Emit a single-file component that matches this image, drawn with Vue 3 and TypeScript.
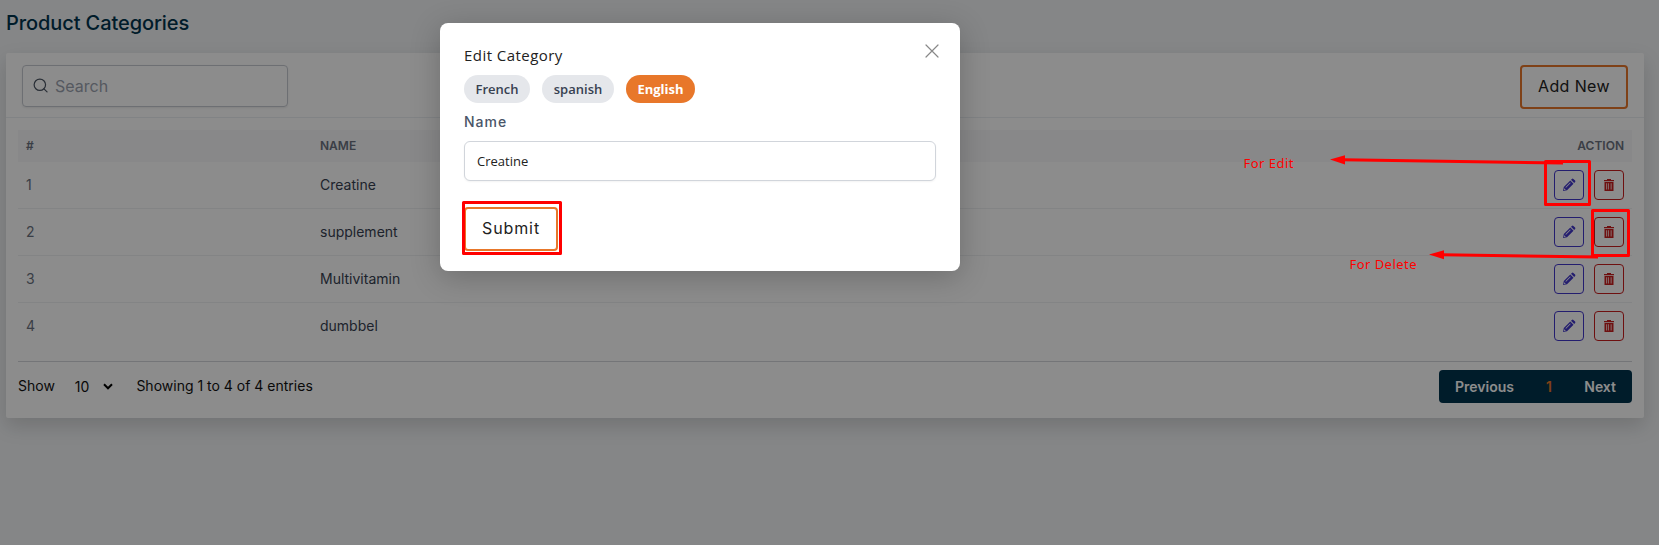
<script setup lang="ts">
import { ref } from 'vue'

interface Category { id: number; name: string }

const categories: Category[] = [
  { id: 1, name: 'Creatine' },
  { id: 2, name: 'supplement' },
  { id: 3, name: 'Multivitamin' },
  { id: 4, name: 'dumbbel' },
]
const languages = ['French', 'spanish', 'English']
const active = ref('English')
const name = ref('Creatine')
const search = ref('')
</script>

<template>
  <div class="screen">
    <main class="page">
      <h1 class="heading">Product Categories</h1>
      <section class="card">
        <header class="toolbar">
          <label class="search">
            <svg viewBox="0 0 16 16" width="15" height="15"><circle cx="7.3" cy="7.2" r="6.1" /><path d="M11.7 11.6 15 14.8" /></svg>
            <input v-model="search" placeholder="Search" />
          </label>
          <button class="outline add"><span>Add New</span></button>
        </header>
        <div class="table">
          <div class="row head"><span>#</span><span>NAME</span><span class="end">ACTION</span></div>
          <div v-for="c in categories" :key="c.id" class="row">
            <span class="num">{{ c.id }}</span>
            <span class="name">{{ c.name }}</span>
            <span class="actions">
              <button class="icon edit">
                <svg viewBox="0 0 14 14" width="14" height="14">
                  <path fill="currentColor" fill-rule="evenodd" d="M1 13l.8-4L8.300 2.500l3.200 3.200L5 12.200zM1.900 12.100l1.900-.4-1.500-1.500zM4 9.800l4.700-4.700-.6-.6-4.700 4.700zM9 1.800l.9-.9q.8-.6 1.500 0L13.100 2.600q.6.800 0 1.500l-.9.9z" />
                </svg>
              </button>
              <button class="icon delete">
                <svg viewBox="0 0 14 14" width="14" height="14">
                  <path fill="currentColor" fill-rule="evenodd" d="M5 1h4v1h3v1.200H2V2h3zM2.500 4h9v9h-9zM4.300 5.300v6.200h.8V5.300zM6.200 5.300v6.200h.7V5.300zM8.700 5.300v6.200h.8V5.300z" />
                </svg>
              </button>
            </span>
          </div>
        </div>
        <footer class="footer">
          <span class="show">Show</span>
          <span class="size">10</span>
          <svg class="chev" viewBox="0 0 10 7" width="10" height="7"><path d="M1 1.300 5 5.300 9 1.300" /></svg>
          <span class="summary">Showing 1 to 4 of 4 entries</span>
          <nav class="pager"><span>Previous</span><span class="current">1</span><span>Next</span></nav>
        </footer>
      </section>
    </main>

    <div class="mask">
      <section class="modal">
        <svg class="close" viewBox="0 0 14 14" width="14" height="14"><path d="M1 1 13 13M13 1 1 13" /></svg>
        <h2>Edit Category</h2>
        <div class="pills">
          <button v-for="l in languages" :key="l" :class="['pill', l, { on: l === active }]" @click="active = l"><span>{{ l }}</span></button>
        </div>
        <label class="label">Name</label>
        <input v-model="name" class="field" />
        <button class="outline submit"><span>Submit</span></button>
      </section>
    </div>

    <svg class="notes" viewBox="0 0 1659 545" width="1659" height="545">
      <g fill="none" stroke="#f00" stroke-width="3" stroke-linejoin="round">
        <rect x="463.500" y="202.500" width="97" height="51" />
        <rect x="1545.500" y="161.500" width="44" height="43" />
        <rect x="1592.500" y="210.500" width="36" height="45" />
        <path d="M1343 159.800 1563 163" />
        <path d="M1442 254.700 1598 257" />
      </g>
      <path fill="#f00" d="M1330 159.600 1345 155.300V164.500zM1429 254.600 1444 250.300V259.300z" />
      <text x="1243.500" y="168" textLength="50">For Edit</text>
      <text x="1349.500" y="269" textLength="67">For Delete</text>
    </svg>
  </div>
</template>

<style>
body { margin: 0; overflow: hidden; }
</style>

<style scoped>
* { box-sizing: border-box; }
button, input { font: inherit; padding: 0; margin: 0; outline: none; }
.screen { position: relative; width: 1659px; height: 545px; overflow: hidden; background: #f2f4f6; font-family: Inter, sans-serif; }
.page { padding: 10px 15px 0 6px; }
.heading { margin: 0; height: 43px; font-size: 20px; line-height: 27px; font-weight: 500; letter-spacing: -.09px; color: #00334e; }
.card { height: 365px; background: #fff; border-radius: 2px; box-shadow: 0 8px 20px rgba(0, 0, 0, .15); }
.toolbar { display: flex; justify-content: space-between; align-items: flex-start; height: 65px; padding: 12px 16px 0; border-bottom: 1px solid #eceef2; }
.search { display: flex; align-items: center; width: 266px; height: 42px; padding: 0 9px 0 10px; gap: 7px; border: 1px solid #c6cad1; border-radius: 4px; box-shadow: 0 1px 2px rgba(0, 0, 0, .08); }
.search svg { fill: none; stroke: #4b5563; stroke-width: 1.3; stroke-linecap: round; margin-top: -2px; }
.search input { border: 0; width: 200px; font-size: 16px; background: transparent; color: #111; }
.search input::placeholder { color: #9ca3af; opacity: 1; }
.outline { display: flex; align-items: center; justify-content: center; height: 44px; padding-bottom: 2px; border: 2px solid #e8772a; border-radius: 4px; background: #fff; color: #222; font-size: 16px; letter-spacing: .4px; }
.add { width: 108px; }
.table { margin: 12px 12px 0; }
.row { display: grid; grid-template-columns: 294px 1fr 120px; align-items: center; height: 47px; padding: 0 8px; border-bottom: 1px solid #eff0f3; font-size: 14px; color: #374151; }
.row:last-child { border-bottom-color: transparent; }
.num, .name { padding-bottom: 2px; }
.row.head { height: 32px; padding-bottom: 2px; border: 0; background: #f8f8f9; font-size: 12px; font-weight: 600; color: #6b7280; }
.num { color: #6b7280; }
.end { text-align: right; }
.actions { display: flex; justify-content: flex-end; gap: 10px; }
.icon { display: grid; place-items: center; width: 30px; height: 30px; border: 1px solid; border-radius: 4px; background: transparent; }
.edit { color: #4338ca; }
.delete { color: #c81e1e; }
.footer { display: flex; align-items: center; height: 51px; margin: 11px 12px 0; padding-bottom: 2px; border-top: 1px solid #d4d6da; font-size: 14px; color: #111; }
.show, .summary { padding-bottom: 1px; }
.size { margin-left: 20px; }
.chev { margin-left: 14px; fill: none; stroke: #000; stroke-width: 2; }
.summary { margin-left: 23px; }
.pager { display: flex; align-items: center; margin-left: auto; width: 193px; height: 33px; padding: 0 16px; border-radius: 4px; background: #00334e; color: #fff; font-weight: 600; }
.current { margin-left: 32px; margin-right: auto; color: #e8772a; }
.mask { position: absolute; inset: 0; background: rgba(0, 0, 0, .45); display: flex; justify-content: center; align-items: flex-start; padding: 23px 259px 0 0; }
.modal { position: relative; display: flex; flex-direction: column; align-items: flex-start; width: 520px; height: 248px; padding: 20px 24px; border-radius: 8px; background: #fff; box-shadow: 0 6px 30px rgba(0, 0, 0, .22); font-family: "Open Sans", sans-serif; }
.close { position: absolute; right: 21px; top: 21px; fill: none; stroke: #888; stroke-width: 1.200; stroke-linecap: round; }
h2 { margin: 0 0 8px; height: 24px; line-height: 25px; font-size: 15px; font-weight: 500; letter-spacing: .45px; color: #222; }
.pills { display: flex; gap: 12px; }
.pill { height: 28px; border: 0; border-radius: 14px; background: #e5e7eb; color: #374151; font-size: 13px; font-weight: 600; }
.French { width: 66px; }
.spanish { width: 72px; }
.English { width: 69px; }
.pill.on { background: #e8772a; color: #fff; font-weight: 700; }
.label { margin-top: 8px; height: 22px; line-height: 22px; font-family: Inter, sans-serif; font-size: 14px; font-weight: 500; letter-spacing: 1px; color: #4a5568; }
.field { margin-top: 8px; width: 472px; height: 40px; padding: 0 12px; border: 1px solid #d1d5db; border-radius: 6px; box-shadow: 0 1px 2px rgba(0, 0, 0, .05); font-size: 13px; color: #222; }
.submit { width: 94px; margin-top: 26px; font-family: Inter, sans-serif; letter-spacing: .9px; }
.notes { position: absolute; inset: 0; pointer-events: none; }
.notes text { fill: #f00; font: 13px "Noto Sans", sans-serif; }
</style>
